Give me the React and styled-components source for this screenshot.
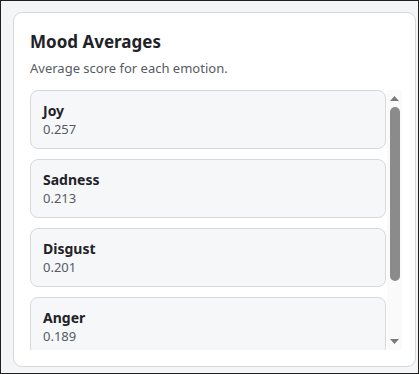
import React from "react";
import styled, { createGlobalStyle } from "styled-components";

const Global = createGlobalStyle`
  html, body { margin: 0; padding: 0; }
  body { font-family: "Noto Sans", "Open Sans", sans-serif; }
  * { box-sizing: border-box; }
`;

const Frame = styled.div`
  width: 419px;
  height: 374px;
  border: 1px solid #1f1f1f;
  background: #f4f5f7;
  padding: 11px 2px 6px 12px;
  display: flex;
`;

const Card = styled.section`
  flex: 1;
  background: #ffffff;
  border: 1px solid #d5d8dd;
  border-radius: 9px;
  padding: 16px 13px 16px 16px;
  display: flex;
  flex-direction: column;
  min-height: 0;
`;

const Title = styled.h2`
  margin: 0;
  font-size: 17px;
  line-height: 26px;
  font-weight: 700;
  color: #1f2328;
`;

const Subtitle = styled.p`
  margin: 4px 0 13px;
  font-size: 13px;
  line-height: 18px;
  color: #555b63;
`;

const ScrollArea = styled.div`
  flex: 1;
  min-height: 0;
  display: flex;
  gap: 1px;
`;

const List = styled.div`
  flex: 1;
  min-height: 0;
  overflow-y: scroll;
  scrollbar-width: none;
  &::-webkit-scrollbar { display: none; }
  display: flex;
  flex-direction: column;
  gap: 10px;
`;

const Item = styled.div`
  flex: none;
  background: #f6f7f9;
  border: 1px solid #d5d9de;
  border-radius: 8px;
  padding: 10px 12px;
  display: flex;
  flex-direction: column;
`;

const Label = styled.div`
  font-size: 14px;
  line-height: 20px;
  font-weight: 700;
  color: #1f2328;
`;

const Value = styled.div`
  font-size: 13px;
  line-height: 17px;
  color: #555b63;
`;

const Scrollbar = styled.div`
  width: 15px;
  flex: none;
  background: #fafafa;
  display: flex;
  flex-direction: column;
  align-items: center;
`;

const ArrowBtn = styled.div`
  height: 17px;
  width: 100%;
  flex: none;
  display: flex;
  align-items: center;
  justify-content: center;
`;

const Track = styled.div`
  flex: 1;
  width: 100%;
  display: flex;
  justify-content: center;
`;

const Thumb = styled.div`
  width: 10px;
  height: 174px;
  background: #8b8b8b;
  border-radius: 5px;
`;

const data = [
  ["Joy", "0.257"],
  ["Sadness", "0.213"],
  ["Disgust", "0.201"],
  ["Anger", "0.189"],
  ["Fear", "0.140"],
];

export default function App() {
  return (
    <>
      <Global />
      <Frame>
        <Card>
          <Title>Mood Averages</Title>
          <Subtitle>Average score for each emotion.</Subtitle>
          <ScrollArea>
            <List>
              {data.map(([k, v]) => (
                <Item key={k}>
                  <Label>{k}</Label>
                  <Value>{v}</Value>
                </Item>
              ))}
            </List>
            <Scrollbar>
              <ArrowBtn>
                <svg width="9" height="5" viewBox="0 0 9 5">
                  <path d="M0 5 L4.5 0 L9 5 Z" fill="#7a7a7a" />
                </svg>
              </ArrowBtn>
              <Track>
                <Thumb />
              </Track>
              <ArrowBtn>
                <svg width="9" height="5" viewBox="0 0 9 5">
                  <path d="M0 0 L4.5 5 L9 0 Z" fill="#7a7a7a" />
                </svg>
              </ArrowBtn>
            </Scrollbar>
          </ScrollArea>
        </Card>
      </Frame>
    </>
  );
}
